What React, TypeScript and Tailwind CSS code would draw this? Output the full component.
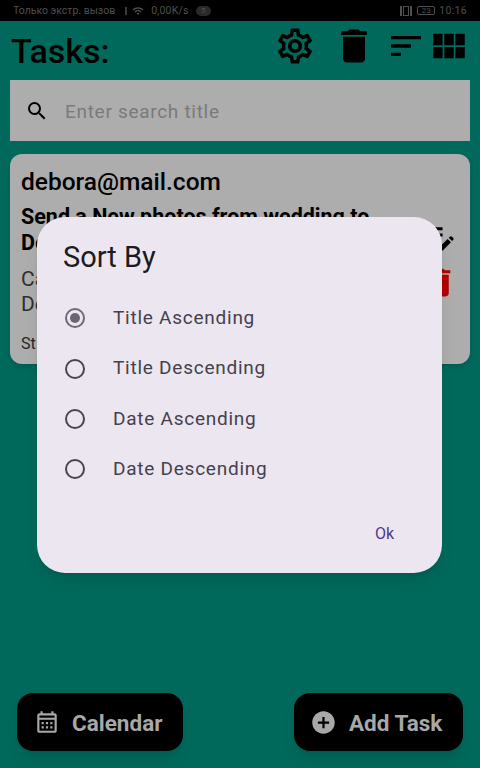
import { MdAddCircle, MdDelete, MdEditNote, MdOutlineCalendarMonth, MdOutlineSettings, MdSearch, MdSort, MdViewModule, MdWifi } from "react-icons/md";

const options = ["Title Ascending", "Title Descending", "Date Ascending", "Date Descending"];

function SortDialog() {
  return (
    <div className="absolute left-[37px] top-[217px] w-[405px] h-[356px] bg-[#ece6f0] rounded-[28px] shadow-lg flex flex-col">
      <h2 className="ml-[26px] mt-[21px] text-[29px] leading-[38px] text-[#1d1b20]">Sort By</h2>
      <div className="mt-[17px] flex flex-col">
        {options.map((label, i) => (
          <div key={label} className="h-[50.4px] flex items-center pl-[28px]">
            <span className={`w-[20px] h-[20px] rounded-full border-2 flex items-center justify-center ${i === 0 ? "border-[#6e6a76]" : "border-[#49454f]"}`}>
              {i === 0 && <span className="w-[10px] h-[10px] rounded-full bg-[#6a6575]" />}
            </span>
            <span className="ml-[28px] text-[19px] tracking-[0.75px] text-[#45414c]">{label}</span>
          </div>
        ))}
      </div>
      <div className="mt-auto mb-[28px] mr-[48px] self-end text-[16px] leading-[22px] text-[#4f378b]">Ok</div>
    </div>
  );
}

export default function App() {
  return (
    <div className="relative w-[480px] h-[768px] overflow-hidden bg-[#00695b] font-['Roboto',sans-serif] flex flex-col">
      <div className="h-[21px] bg-black flex items-center justify-between pl-[13px] pr-[13px] text-[10.5px] text-[#4f4f4f]">
        <div className="flex items-center">
          <span>Только экстр. вызов</span>
          <span className="ml-[2px] w-[10px] h-[8px] border-r-2 border-[#3a3a3a]" />
          <MdWifi size={12} className="ml-[5px]" />
          <span className="ml-[7px] tracking-[0.2px]">0,00K/s</span>
          <span className="ml-[7px] w-[15px] h-[10px] rounded-full bg-[#2a2a2a] text-[8px] leading-[10px] text-center">5</span>
        </div>
        <div className="flex items-center">
          <span className="w-[12px] h-[10px] border-x-2 border-[#4f4f4f] flex justify-center">
            <span className="w-[6px] h-full border border-[#4f4f4f] bg-black" />
          </span>
          <span className="ml-[5px] w-[18px] h-[9px] rounded-[2px] border border-[#4f4f4f] text-[8px] leading-[8px] text-center">23</span>
          <span className="ml-[4px] tracking-[0.3px]">10:16</span>
        </div>
      </div>

      <div className="h-[59px] pl-[11px] pr-[10px] flex items-center text-black">
        <h1 className="text-[34px] font-medium leading-none">Tasks:</h1>
        <div className="ml-auto flex items-center mt-[-10px]">
          <MdOutlineSettings size={42} />
          <MdDelete size={44} className="ml-[16px]" />
          <MdSort size={40} className="ml-[10px]" />
          <MdViewModule size={42} className="ml-[2px] mt-[1px]" />
        </div>
      </div>

      <div className="mx-[10px] h-[61px] bg-[#adadad] flex items-center pl-[15px]">
        <MdSearch size={24} className="text-black" />
        <span className="ml-[16px] mt-[3px] text-[19px] tracking-[0.7px] text-[#7a7a7a]">Enter search title</span>
      </div>

      <div className="mx-[10px] mt-[13px] h-[210px] bg-[#adadad] rounded-[12px] shadow-md relative px-[11px] pt-[13px] text-black">
        <div className="text-[24.5px] font-medium leading-[30px]">debora@mail.com</div>
        <div className="mt-[7px] text-[21.5px] font-bold leading-[26px] w-[390px]">Send a New photos from wedding to<br />De</div>
        <div className="mt-[11px] text-[21px] leading-[25px] text-[#2f2f2f]">Ca<br />De</div>
        <div className="mt-[17px] text-[16px] leading-[20px] text-[#262626]">St</div>
        <MdEditNote size={37} className="absolute right-[12px] top-[64px]" />
        <MdDelete size={37} className="absolute right-[12px] top-[110px] text-[#b40000]" />
      </div>

      <div className="mt-auto mb-[17px] px-[17px] flex justify-between">
        <div className="w-[166px] h-[58px] bg-black rounded-[16px] shadow-lg flex items-center pl-[17px] text-[#a8a8a8]">
          <MdOutlineCalendarMonth size={26} />
          <span className="ml-[12px] mt-[3px] text-[22.5px] font-bold">Calendar</span>
        </div>
        <div className="w-[169px] h-[58px] bg-black rounded-[16px] shadow-lg flex items-center pl-[16px] text-[#a8a8a8]">
          <MdAddCircle size={27} />
          <span className="ml-[12px] mt-[3px] text-[22.5px] font-bold">Add Task</span>
        </div>
      </div>

      <SortDialog />
    </div>
  );
}
